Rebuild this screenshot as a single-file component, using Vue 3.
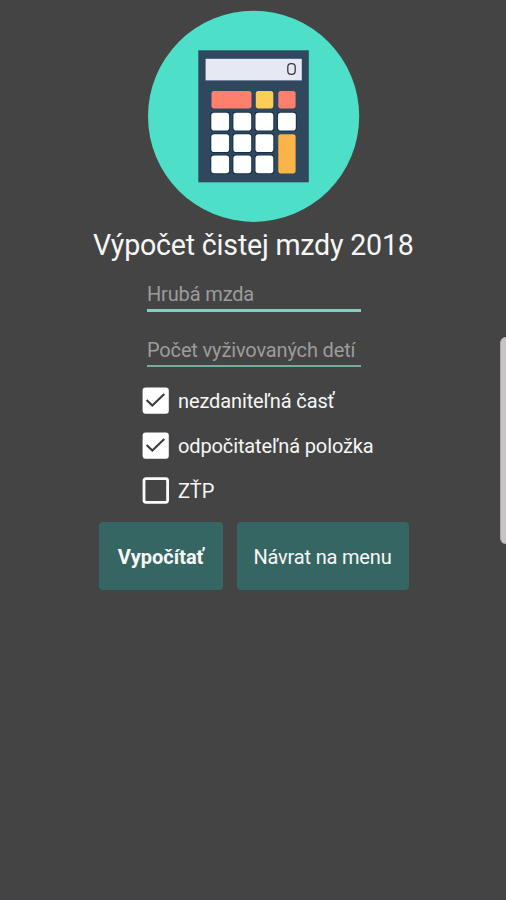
<script setup>
import { ref } from 'vue'

const gross = ref('')
const children = ref('')
const options = ref([
  { id: 'taxfree', label: 'nezdaniteľná časť', checked: true },
  { id: 'deductible', label: 'odpočitateľná položka', checked: true },
  { id: 'ztp', label: 'ZŤP', checked: false },
])
const keys = [
  [211.3, 112.8], [233.4, 112.8], [255.5, 112.8], [278, 112.8],
  [211.3, 134.2], [233.4, 134.2], [255.5, 134.2],
  [211.3, 155.5], [233.4, 155.5], [255.5, 155.5],
]
</script>

<template>
  <main class="screen">
    <svg class="logo" width="213" height="212" viewBox="147 10 213 212">
      <circle cx="253.6" cy="116.3" r="105.6" fill="#4edfc9" />
      <rect x="198.3" y="50.3" width="110.5" height="132" fill="#30485e" />
      <rect x="205.6" y="58.8" width="96.2" height="21.6" fill="#e6e9f4" />
      <rect x="287.8" y="63.6" width="7.4" height="10.8" rx="3.4" fill="none" stroke="#34383f" stroke-width="1.3" />
      <rect x="211.5" y="91" width="40" height="17.4" rx="2.6" fill="#fe7f6c" />
      <rect x="255.8" y="91" width="17.5" height="17.4" rx="2.6" fill="#fdcd55" />
      <rect x="278.3" y="91" width="17.3" height="17.4" rx="2.6" fill="#fe7f6c" />
      <g v-for="([x, y], i) in keys" :key="i">
        <rect :x="x - 1" :y="y - 1" width="19.8" height="19.8" rx="3" fill="#14304d" />
        <rect :x="x" :y="y" width="17.8" height="17.8" rx="2.8" fill="#fff" />
      </g>
      <rect x="278.3" y="134.2" width="17.3" height="39.2" rx="2.6" fill="#fbb447" />
    </svg>

    <h1 class="title">Výpočet čistej mzdy 2018</h1>

    <form class="form" @submit.prevent>
      <input v-model="gross" class="field focused" placeholder="Hrubá mzda" />
      <input v-model="children" class="field" placeholder="Počet vyživovaných detí" />

      <div class="options">
        <label v-for="o in options" :key="o.id" class="option">
          <input v-model="o.checked" class="native" type="checkbox" />
          <svg class="box" width="27" height="27" viewBox="0 0 27 27">
            <rect v-if="o.checked" x="0.6" y="0.4" width="26.2" height="26.3" rx="3" fill="#fff" />
            <rect v-else x="2" y="1.7" width="23.6" height="23.6" rx="2" fill="none" stroke="#fafafa" stroke-width="2.8" />
            <path v-if="o.checked" d="M4.6 12.9 L10.3 18.5 L22.3 7.1" fill="none" stroke="#3c3c3c" stroke-width="2.1" />
          </svg>
          <span class="label">{{ o.label }}</span>
        </label>
      </div>

      <div class="actions">
        <button class="button primary" type="submit">Vypočítať</button>
        <button class="button secondary" type="button">Návrat na menu</button>
      </div>
    </form>
    <div class="handle"></div>
  </main>
</template>

<style>
body {
  margin: 0;
  background: #444;
}
</style>

<style scoped>
.screen {
  position: relative;
  box-sizing: border-box;
  width: 506px;
  height: 900px;
  padding-top: 10px;
  overflow: hidden;
  border-bottom: 1px solid #4a3f45;
  background: #444;
  color: #f6f6f6;
  font-family: Roboto, sans-serif;
}
.logo {
  display: block;
  margin-left: 147px;
}
.title {
  margin: 3px 0 0 93px;
  font-size: 28.6px;
  font-weight: 400;
  letter-spacing: -0.21px;
  line-height: 40px;
  white-space: nowrap;
}
.form {
  display: flex;
  flex-direction: column;
}
.field {
  box-sizing: border-box;
  width: 214px;
  height: 31px;
  margin: 16px 0 0 147px;
  padding: 0 0 1px;
  border: 0;
  border-bottom: 2px solid #78aaa2;
  border-radius: 0;
  outline: 0;
  background: transparent;
  color: #f6f6f6;
  font: 400 20px Roboto, sans-serif;
  letter-spacing: -0.15px;
}
.field.focused {
  padding-bottom: 2px;
  border-bottom: 3px solid #83cdc1;
}
.field + .field {
  margin-top: 24px;
}
.field::placeholder {
  color: #9c9c9c;
  opacity: 1;
}
.options {
  display: flex;
  flex-direction: column;
  gap: 18px;
  margin: 20px 0 0 142px;
}
.option {
  display: flex;
  align-items: center;
  height: 27px;
}
.native {
  position: absolute;
  opacity: 0;
  pointer-events: none;
}
.label {
  margin-left: 9px;
  padding-top: 1px;
  font-size: 20px;
  letter-spacing: -0.12px;
  line-height: 27px;
  white-space: nowrap;
}
.actions {
  display: flex;
  gap: 14px;
  margin: 18px 0 0 99px;
}
.button {
  height: 68px;
  padding: 2px 0 0;
  border: 0;
  border-radius: 4px;
  background: #356664;
  color: #f8f8f8;
  font: 400 20px Roboto, sans-serif;
  white-space: nowrap;
}
.primary {
  width: 123.5px;
  font-weight: 700;
}
.secondary {
  width: 172px;
  letter-spacing: -0.18px;
}
.handle {
  position: absolute;
  top: 337px;
  right: 0;
  box-sizing: border-box;
  width: 6px;
  height: 207px;
  border-left: 1px solid #a8a8a8;
  border-radius: 6px 0 0 6px;
  background: #c6c4c5;
}
</style>
